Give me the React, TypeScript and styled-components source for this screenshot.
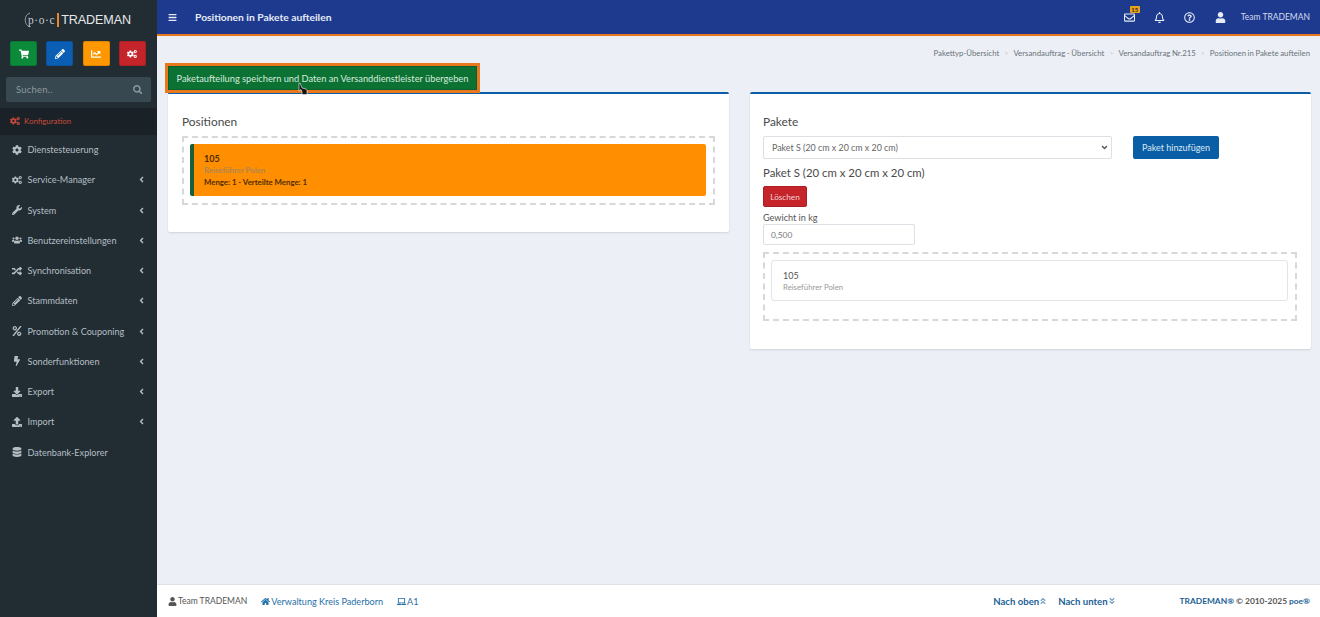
import React, { FC } from 'react';
import styled, { createGlobalStyle } from 'styled-components';
import {
  FaAngleDoubleDown,
  FaAngleDoubleUp,
  FaAngleDown,
  FaAngleLeft,
  FaBars,
  FaBolt,
  FaChartLine,
  FaCog,
  FaCogs,
  FaDatabase,
  FaDownload,
  FaHome,
  FaLaptop,
  FaPencilAlt,
  FaPercent,
  FaRandom,
  FaRegBell,
  FaRegEnvelope,
  FaRegQuestionCircle,
  FaSearch,
  FaShoppingCart,
  FaUpload,
  FaUser,
  FaUsers,
  FaWrench,
} from 'react-icons/fa';

const GlobalStyle = createGlobalStyle`
  html, body {
    margin: 0;
    height: 100%;
    overflow: hidden;
  }
  body {
    font-family: Lato, "Noto Sans", sans-serif;
    font-size: 10px;
    color: #444;
    background: #ecf0f6;
  }
  * {
    box-sizing: border-box;
  }
`;

const Page = styled.div`
  display: flex;
  width: 1320px;
  height: 617px;
`;

const Sidebar = styled.aside`
  width: 157px;
  flex: none;
  background: #222c33;
  display: flex;
  flex-direction: column;
`;

const Logo = styled.div`
  height: 41px;
  display: flex;
  align-items: center;
  justify-content: center;
  padding: 0 5px 2px 0;
  color: #e6e9ea;
`;

const LogoMark = styled.span`
  position: relative;
  font-family: 'Liberation Serif', serif;
  font-size: 11.5px;
  letter-spacing: 0.6px;
  color: #c5cbce;
  padding-left: 7px;
`;

const LogoArc = styled.svg`
  position: absolute;
  left: 0;
  top: -2px;
`;

const LogoBar = styled.span`
  width: 2px;
  height: 14px;
  background: #e8872a;
  margin: 0 2px 0 2px;
`;

const LogoName = styled.span`
  font-family: 'Liberation Sans', sans-serif;
  font-size: 12.6px;
  letter-spacing: -0.1px;
`;

const QuickButtons = styled.div`
  display: flex;
  justify-content: space-between;
  padding: 0 11px 0 10px;
`;

const QuickButton = styled.button<{ $bg: string }>`
  width: 27px;
  height: 25px;
  padding: 0;
  border: 1px solid rgba(0, 0, 0, 0.12);
  border-radius: 2px;
  background: ${(p) => p.$bg};
  color: #fff;
  display: flex;
  align-items: center;
  justify-content: center;
  font-size: 10px;
`;

const SearchBox = styled.div`
  height: 25px;
  margin: 11px 6px 6px;
  padding: 0 9px 0 10px;
  background: #374850;
  border-radius: 2px;
  display: flex;
  align-items: center;
  justify-content: space-between;
  color: #8d999f;
  font-size: 9.5px;
  letter-spacing: 0.2px;
`;

const ConfigRow = styled.div`
  height: 26.5px;
  display: flex;
  align-items: center;
  gap: 4px;
  padding-left: 10px;
  background: #1a2227;
  color: #c8493d;
  font-size: 7.9px;
  & svg {
    font-size: 10px;
  }
`;

const Menu = styled.nav`
  display: flex;
  flex-direction: column;
`;

const MenuItem = styled.div`
  height: 30.25px;
  display: flex;
  align-items: center;
  padding: 0 11px 0 12px;
  color: #b4bfc4;
  font-size: 9.1px;
  white-space: nowrap;
`;

const MenuIcon = styled.span`
  width: 15.5px;
  flex: none;
  display: flex;
  font-size: 10px;
`;

const MenuLabel = styled.span`
  flex: 1;
`;

const Main = styled.div`
  flex: 1;
  min-width: 0;
  display: flex;
  flex-direction: column;
`;

const Header = styled.header`
  height: 36px;
  flex: none;
  background: #1d3a8f;
  border-bottom: 2px solid #e8791e;
  display: flex;
  align-items: center;
  padding: 0 10px 0 11px;
  color: #e6ebf5;
`;

const Burger = styled.span`
  display: flex;
  font-size: 9px;
  margin-right: 18px;
`;

const PageTitle = styled.div`
  flex: 1;
  font-size: 10.3px;
  font-weight: 700;
`;

const HeaderIcon = styled.span<{ $gap: number }>`
  position: relative;
  display: flex;
  font-size: 11px;
  margin-right: ${(p) => p.$gap}px;
`;

const Badge = styled.span`
  position: absolute;
  top: -6px;
  right: -5px;
  background: #e8a21c;
  color: #4a3208;
  font-size: 6px;
  font-weight: 700;
  line-height: 7px;
  padding: 0 1.5px;
  border-radius: 1px;
`;

const UserName = styled.span`
  font-size: 8.5px;
  color: #d5dcec;
`;

const Content = styled.main`
  flex: 1;
  min-height: 0;
  position: relative;
  padding: 0 9px 0 11px;
`;

const Breadcrumb = styled.div`
  height: 27px;
  display: flex;
  align-items: center;
  justify-content: flex-end;
  padding: 7px 1px 0 0;
  font-size: 7.8px;
  word-spacing: -0.4px;
  color: #6b7278;
`;

const Crumb = styled.span`
  &:not(:first-child)::before {
    content: '>';
    color: #c4c9cf;
    margin: 0 5px;
    font-size: 7px;
  }
`;

const SaveButton = styled.button`
  display: block;
  width: 309px;
  height: 24px;
  margin: 3px 0 2px;
  padding: 0;
  background: #0b7233;
  color: #d9eadf;
  border: 1px solid #0a5f2c;
  outline: 3px solid #e8791e;
  font-family: inherit;
  font-size: 9.25px;
  text-align: center;
  position: relative;
  z-index: 1;
`;

const Cursor = styled.svg`
  position: absolute;
  left: 141px;
  top: 46px;
  z-index: 2;
`;

const Cards = styled.div`
  display: grid;
  grid-template-columns: 561px 561px;
  column-gap: 21px;
  align-items: start;
`;

const Card = styled.section<{ $height: number; $left: number }>`
  height: ${(p) => p.$height}px;
  background: #fff;
  border-top: 2px solid #0a5ea5;
  border-radius: 2px;
  box-shadow: 0 1px 2px rgba(0, 0, 0, 0.12);
  padding: 20px 14px 0 ${(p) => p.$left}px;
`;

const CardTitle = styled.h3`
  margin: 0;
  font-size: 11.9px;
  font-weight: 400;
  line-height: 16px;
  color: #4a4a4a;
`;

const DropZone = styled.div<{ $top?: number }>`
  height: 69px;
  margin-top: ${(p) => p.$top ?? 0}px;
  padding: 6px 7px 6px 6px;
  border: 2px dashed #d8d8d8;
`;

const PositionItem = styled.div`
  height: 52px;
  background: #ff8f00;
  border-left: 4px solid #1b5e3a;
  border-radius: 2px;
  padding: 9px 10px;
  color: #4f2c04;
  font-size: 7.8px;
  font-weight: 700;
`;

const ItemNumber = styled.div`
  font-size: 9px;
  line-height: 11px;
  margin-bottom: 1px;
`;

const ItemMuted = styled.div`
  color: #b08650;
  line-height: 11px;
  margin-bottom: 1px;
`;

const ItemLine = styled.div`
  line-height: 11px;
`;

const PackageRow = styled.div`
  display: flex;
  align-items: center;
  margin-top: 6px;
`;

const SelectWrap = styled.div`
  position: relative;
  width: 349px;
  height: 23px;
  color: #555;
  & svg {
    position: absolute;
    right: 3px;
    top: 7px;
    font-size: 9px;
    pointer-events: none;
  }
`;

const Select = styled.select`
  appearance: none;
  width: 100%;
  height: 100%;
  border: 1px solid #dcdfe3;
  border-radius: 2px;
  background: #fff;
  color: #666;
  font-family: inherit;
  font-size: 8.9px;
  padding: 0 8px;
`;

const AddButton = styled.button`
  width: 86px;
  height: 23px;
  margin-left: 21px;
  padding: 0;
  background: #0a5ea5;
  color: #dbe8f3;
  border: none;
  border-radius: 2px;
  font-family: inherit;
  font-size: 9px;
`;

const PackageName = styled.div`
  margin-top: 6px;
  font-size: 11.4px;
  line-height: 16px;
  color: #4a4a4a;
`;

const DeleteButton = styled.button`
  display: block;
  width: 44px;
  height: 21px;
  margin-top: 5px;
  padding: 0;
  background: #c6242b;
  color: #f0d3d4;
  border: 1px solid #a81f25;
  border-radius: 2px;
  font-family: inherit;
  font-size: 8.2px;
`;

const FieldLabel = styled.div`
  margin-top: 4px;
  font-size: 9.1px;
  line-height: 13px;
  color: #555;
`;

const WeightInput = styled.div`
  width: 152px;
  height: 21px;
  margin: 0 0 7px;
  padding-left: 7px;
  border: 1px solid #dcdfe3;
  border-radius: 2px;
  display: flex;
  align-items: center;
  color: #777;
  font-size: 8.4px;
`;

const PackedItem = styled.div`
  height: 41px;
  border: 1px solid #e2e4e7;
  border-radius: 3px;
  padding: 9px 11px;
  color: #555;
`;

const PackedNumber = styled.div`
  font-size: 9px;
  line-height: 12px;
`;

const PackedName = styled.div`
  font-size: 7.8px;
  line-height: 11px;
  color: #999;
`;

const Footer = styled.footer`
  height: 33px;
  flex: none;
  background: #fff;
  border-top: 1px solid #dfe3e8;
  display: flex;
  align-items: center;
  padding: 0 10px 0 11px;
  color: #555;
`;

const FooterPart = styled.span<{ $gap?: number; $color?: string; $size: number }>`
  display: inline-flex;
  align-items: center;
  gap: 1px;
  margin-right: ${(p) => p.$gap ?? 0}px;
  color: ${(p) => p.$color ?? 'inherit'};
  font-size: ${(p) => p.$size}px;
  white-space: nowrap;
  & svg {
    font-size: 9px;
  }
`;

const ScrollLink = styled.span<{ $gap: number }>`
  display: inline-flex;
  align-items: center;
  margin-right: ${(p) => p.$gap}px;
  color: #1d5f96;
  font-size: 9.6px;
  font-weight: 700;
  white-space: nowrap;
  & svg {
    font-size: 8px;
    color: #6f9cc0;
  }
`;

const Spacer = styled.div`
  flex: 1;
`;

const FooterText = styled.span`
  font-size: 8.4px;
  font-weight: 700;
  color: #555;
  white-space: nowrap;
`;

const FooterLink = styled.span`
  color: #1d5f96;
`;

const menuItems = [
  { icon: <FaCog />, label: 'Dienstesteuerung', sub: false },
  { icon: <FaCogs />, label: 'Service-Manager', sub: true },
  { icon: <FaWrench />, label: 'System', sub: true },
  { icon: <FaUsers />, label: 'Benutzereinstellungen', sub: true },
  { icon: <FaRandom />, label: 'Synchronisation', sub: true },
  { icon: <FaPencilAlt />, label: 'Stammdaten', sub: true },
  { icon: <FaPercent />, label: 'Promotion & Couponing', sub: true },
  { icon: <FaBolt />, label: 'Sonderfunktionen', sub: true },
  { icon: <FaDownload />, label: 'Export', sub: true },
  { icon: <FaUpload />, label: 'Import', sub: true },
  { icon: <FaDatabase />, label: 'Datenbank-Explorer', sub: false },
];

const crumbs = [
  'Pakettyp-Übersicht',
  'Versandauftrag - Übersicht',
  'Versandauftrag Nr.215',
  'Positionen in Pakete aufteilen',
];

const App: FC = () => (
  <Page>
    <GlobalStyle />
    <Sidebar>
      <Logo>
        <LogoMark>
          <LogoArc width="10" height="16" viewBox="0 0 10 16" fill="none">
            <path d="M9 1A7.5 7.5 0 0 0 9 15" stroke="#aeb5b9" strokeWidth="0.8" />
          </LogoArc>
          p·o·c
        </LogoMark>
        <LogoBar />
        <LogoName>TRADEMAN</LogoName>
      </Logo>
      <QuickButtons>
        <QuickButton $bg="#0b8a3a"><FaShoppingCart /></QuickButton>
        <QuickButton $bg="#0a5fb4"><FaPencilAlt /></QuickButton>
        <QuickButton $bg="#ff9800"><FaChartLine /></QuickButton>
        <QuickButton $bg="#c6242b"><FaCogs /></QuickButton>
      </QuickButtons>
      <SearchBox>
        Suchen..
        <FaSearch />
      </SearchBox>
      <ConfigRow>
        <FaCogs />
        Konfiguration
      </ConfigRow>
      <Menu>
        {menuItems.map((item) => (
          <MenuItem key={item.label}>
            <MenuIcon>{item.icon}</MenuIcon>
            <MenuLabel>{item.label}</MenuLabel>
            {item.sub && <FaAngleLeft />}
          </MenuItem>
        ))}
      </Menu>
    </Sidebar>
    <Main>
      <Header>
        <Burger><FaBars /></Burger>
        <PageTitle>Positionen in Pakete aufteilen</PageTitle>
        <HeaderIcon $gap={19}>
          <FaRegEnvelope />
          <Badge>15</Badge>
        </HeaderIcon>
        <HeaderIcon $gap={19}><FaRegBell /></HeaderIcon>
        <HeaderIcon $gap={20}><FaRegQuestionCircle /></HeaderIcon>
        <HeaderIcon $gap={15}><FaUser /></HeaderIcon>
        <UserName>Team TRADEMAN</UserName>
      </Header>
      <Content>
        <Breadcrumb>
          {crumbs.map((crumb) => (
            <Crumb key={crumb}>{crumb}</Crumb>
          ))}
        </Breadcrumb>
        <SaveButton>Paketaufteilung speichern und Daten an Versanddienstleister übergeben</SaveButton>
        <Cursor width="10" height="14" viewBox="0 0 10 14">
          <path
            d="M1 1v8l2-1.5 1 2 0 3h5v-4L8 7 4 6 2 1z"
            fill="#111"
            stroke="#fff"
            strokeWidth="0.6"
          />
        </Cursor>
        <Cards>
          <Card $height={140} $left={14}>
            <CardTitle>Positionen</CardTitle>
            <DropZone $top={6}>
              <PositionItem>
                <ItemNumber>105</ItemNumber>
                <ItemMuted>Reiseführer Polen</ItemMuted>
                <ItemLine>Menge: 1 - Verteilte Menge: 1</ItemLine>
              </PositionItem>
            </DropZone>
          </Card>
          <Card $height={257} $left={13}>
            <CardTitle>Pakete</CardTitle>
            <PackageRow>
              <SelectWrap>
                <Select defaultValue="s">
                  <option value="s">Paket S (20 cm x 20 cm x 20 cm)</option>
                </Select>
                <FaAngleDown />
              </SelectWrap>
              <AddButton>Paket hinzufügen</AddButton>
            </PackageRow>
            <PackageName>Paket S (20 cm x 20 cm x 20 cm)</PackageName>
            <DeleteButton>Löschen</DeleteButton>
            <FieldLabel>Gewicht in kg</FieldLabel>
            <WeightInput>0,500</WeightInput>
            <DropZone>
              <PackedItem>
                <PackedNumber>105</PackedNumber>
                <PackedName>Reiseführer Polen</PackedName>
              </PackedItem>
            </DropZone>
          </Card>
        </Cards>
      </Content>
      <Footer>
        <FooterPart $gap={14} $size={8.5}><FaUser />Team TRADEMAN</FooterPart>
        <FooterPart $gap={14} $size={9.1} $color="#1f6fa8"><FaHome />Verwaltung Kreis Paderborn</FooterPart>
        <FooterPart $size={9.1} $color="#1f6fa8"><FaLaptop />A1</FooterPart>
        <Spacer />
        <ScrollLink $gap={11}>Nach oben<FaAngleDoubleUp /></ScrollLink>
        <ScrollLink $gap={64}>Nach unten<FaAngleDoubleDown /></ScrollLink>
        <FooterText>
          <FooterLink>TRADEMAN®</FooterLink> © 2010-2025 <FooterLink>poe®</FooterLink>
        </FooterText>
      </Footer>
    </Main>
  </Page>
);

export default App;
